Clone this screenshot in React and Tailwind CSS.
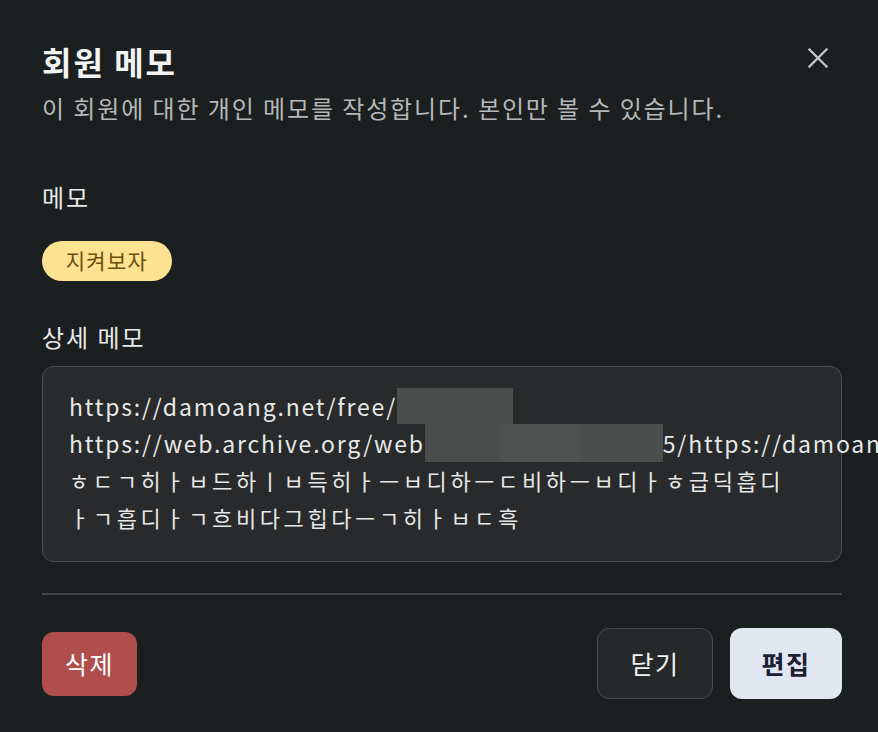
export default function App() {
  const font = { fontFamily: '"Noto Sans CJK KR", "Noto Sans", sans-serif' };

  return (
    <div className="min-h-[732px] w-[878px] overflow-hidden bg-[#1c1f20] text-[#eceeee]" style={font}>
      <div className="pl-[42px] pr-[36px] pt-[40px]">
        {/* Header */}
        <div className="flex items-start justify-between">
          <div>
            <h2 className="text-[32px] leading-[42px] font-bold tracking-[2px] text-[#f2f4f4]">회원 메모</h2>
            <p className="mt-[10px] text-[24px] leading-[32px] tracking-[1.9px] text-[#b4b8b9]">
              이 회원에 대한 개인 메모를 작성합니다. 본인만 볼 수 있습니다.
            </p>
          </div>
          <button className="mt-[8px] mr-[14px] text-[#c0c4c4]">
            <svg width="20" height="20" viewBox="0 0 20 20" fill="none" stroke="currentColor" strokeWidth="2.3" strokeLinecap="square">
              <path d="M1.5 1.5L18.5 18.5M18.5 1.5L1.5 18.5" />
            </svg>
          </button>
        </div>

        {/* Memo tag */}
        <div className="mt-[58px] text-[24px] leading-[30px] tracking-[2px] text-[#e8eaea]">메모</div>
        <div className="mt-[29px] flex">
          <span className="flex h-[40px] w-[130px] items-center justify-center rounded-full bg-[#fde291] text-[21px] tracking-[1.3px] text-[#6b4f0c]">
            지켜보자
          </span>
        </div>

        {/* Detail memo */}
        <div className="mt-[41px] text-[24px] leading-[30px] tracking-[2px] text-[#e8eaea]">상세 메모</div>
        <div className="mt-[14px] rounded-[12px] border border-[#4a4f50] bg-[#282a2b] px-[26px] pt-[21px] pb-[25px] text-[23px] leading-[37px] text-[#e6e8e8]">
          <div className="flex whitespace-nowrap tracking-[1.8px]">
            <span>https://damoang.net/free/</span>
            <span className="h-[36px] w-[116px] bg-[#4c4d4d]" />
          </div>
          <div className="flex whitespace-nowrap tracking-[1.8px]">
            <span>https://web.archive.org/web</span>
            <span className="mt-[-1px] flex h-[38px]">
              <span className="w-[75px] bg-[#4b4c4c]" />
              <span className="w-[80px] bg-[#505151]" />
              <span className="w-[83px] bg-[#4d4e4e]" />
            </span>
            <span>5/https://damoang.net/free/</span>
          </div>
          <div className="whitespace-nowrap text-[22px] tracking-[3.6px]">ㅎㄷㄱ히ㅏㅂ드하ㅣㅂ득히ㅏㅡㅂ디하ㅡㄷ비하ㅡㅂ디ㅏㅎ급딕흡디</div>
          <div className="whitespace-nowrap text-[22px] tracking-[3.6px]">ㅏㄱ흡디ㅏㄱ흐비다그힙다ㅡㄱ히ㅏㅂㄷ흑</div>
        </div>

        {/* Divider */}
        <div className="mt-[31px] h-[2px] bg-[#404747]" />

        {/* Footer */}
        <div className="mt-[33px] flex items-center justify-between">
          <button className="flex h-[64px] w-[95px] items-center justify-center rounded-[12px] bg-[#b04d4d] text-[25px] tracking-[1.5px] text-white">
            삭제
          </button>
          <div className="flex gap-[17px]">
            <button className="flex h-[71px] w-[116px] items-center justify-center rounded-[12px] border border-[#474c4d] bg-[#25292a] text-[25px] tracking-[1.5px] text-[#f2f4f4]">
              닫기
            </button>
            <button className="flex h-[71px] w-[112px] items-center justify-center rounded-[12px] bg-[#e0e7f1] text-[25px] font-bold tracking-[1.5px] text-[#1c2034]">
              편집
            </button>
          </div>
        </div>
      </div>
    </div>
  );
}
